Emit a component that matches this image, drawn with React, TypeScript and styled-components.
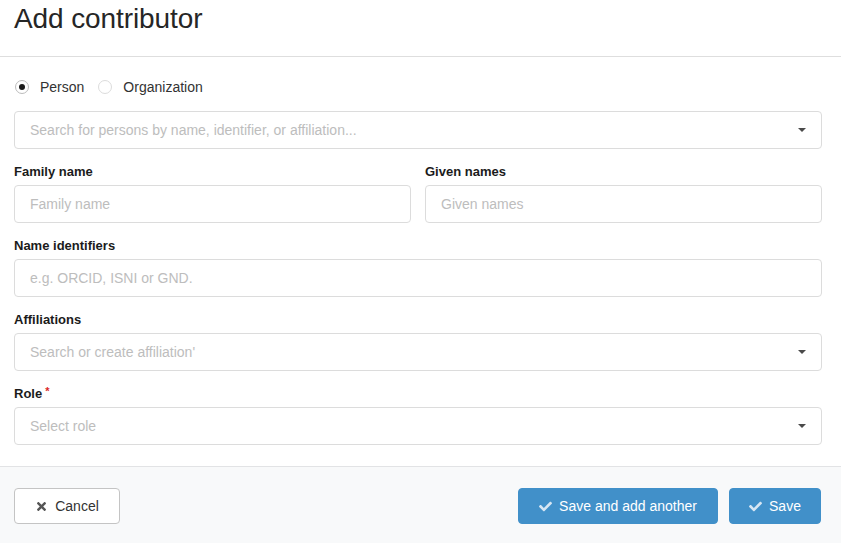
import { createGlobalStyle } from "styled-components";
import styled from "styled-components";
import { FaCheck, FaTimes } from "react-icons/fa";

const GlobalStyle = createGlobalStyle`
  html, body {
    margin: 0;
    padding: 0;
    background: #fff;
  }
  body {
    font-family: "Liberation Sans", Arial, sans-serif;
    color: #222;
  }
`;

const ModalRoot = styled.div`
  width: 841px;
  display: flex;
  flex-direction: column;
  background: #fff;
`;
const Header = styled.div`
  height: 57px;
  box-sizing: border-box;
  padding: 2px 14px 0;
  border-bottom: 1px solid #dedede;
`;
const Title = styled.h1`
  margin: 0;
  font-size: 28px;
  font-weight: 400;
  line-height: 34px;
  color: #262626;
  letter-spacing: -0.1px;
`;
const Content = styled.div`
  display: flex;
  flex-direction: column;
  padding: 20px 19px 21px 14px;
`;
const RadioRow = styled.div`
  display: flex;
  align-items: center;
  height: 20px;
  gap: 13px;
  margin-bottom: 14px;
`;
const RadioOption = styled.label`
  display: flex;
  align-items: center;
  gap: 11px;
  font-size: 14px;
  color: #333;
`;
const RadioCircle = styled.span<{ $checked?: boolean }>`
  width: 14px;
  height: 14px;
  box-sizing: border-box;
  border-radius: 50%;
  border: 1px solid ${(p) => (p.$checked ? "#bcbcbc" : "#dcdcdc")};
  display: flex;
  align-items: center;
  justify-content: center;
  margin-left: 1px;
  &::after {
    content: "";
    width: 6px;
    height: 6px;
    border-radius: 50%;
    background: ${(p) => (p.$checked ? "#1b1b1b" : "transparent")};
  }
`;
const Row = styled.div`
  display: grid;
  grid-template-columns: 1fr 1fr;
  column-gap: 14px;
`;
const Field = styled.div`
  display: flex;
  flex-direction: column;
  margin-top: 14px;
`;
const Label = styled.div`
  font-size: 13px;
  font-weight: 700;
  line-height: 18px;
  color: #1b1b1b;
  margin-bottom: 4px;
  display: flex;
  align-items: flex-start;
`;
const Required = styled.span`
  color: #db2828;
  font-size: 11px;
  line-height: 12px;
  margin-left: 3px;
`;
const Input = styled.div<{ $select?: boolean }>`
  height: 38px;
  box-sizing: border-box;
  border: 1px solid #dcdcdc;
  border-radius: 4px;
  display: flex;
  align-items: center;
  justify-content: space-between;
  padding: 0 14px 0 15px;
  font-size: 14px;
  color: #bdbdbd;
  background: #fff;
`;
const Caret = styled.span`
  width: 0;
  height: 0;
  border-left: 4px solid transparent;
  border-right: 4px solid transparent;
  border-top: 4px solid #4a4a4a;
  margin-right: 1px;
`;
const Footer = styled.div`
  border-top: 1px solid #e2e3e5;
  background: #f8f9fa;
  display: flex;
  align-items: center;
  padding: 21px 20px 20px 14px;
  gap: 11px;
`;
const Spacer = styled.div`
  flex: 1;
`;
const Button = styled.button<{ $primary?: boolean; $w: number }>`
  width: ${(p) => p.$w}px;
  height: 36px;
  box-sizing: border-box;
  border-radius: 4px;
  border: 1px solid ${(p) => (p.$primary ? "#4190c9" : "#c4c4c4")};
  background: ${(p) => (p.$primary ? "#4190c9" : "#fff")};
  color: ${(p) => (p.$primary ? "#fff" : "#333")};
  font-family: "Liberation Sans", Arial, sans-serif;
  font-size: 14px;
  display: flex;
  align-items: center;
  justify-content: center;
  gap: 7px;
  padding: 0;
  cursor: pointer;
  svg {
    color: ${(p) => (p.$primary ? "#d6e6f3" : "#555")};
  }
`;

const SelectField = ({ placeholder }: { placeholder: string }) => (
  <Input $select>
    <span>{placeholder}</span>
    <Caret />
  </Input>
);

export default function App() {
  return (
    <ModalRoot>
      <GlobalStyle />
      <Header>
        <Title>Add contributor</Title>
      </Header>
      <Content>
        <RadioRow>
          <RadioOption>
            <RadioCircle $checked />
            Person
          </RadioOption>
          <RadioOption>
            <RadioCircle />
            Organization
          </RadioOption>
        </RadioRow>
        <SelectField placeholder="Search for persons by name, identifier, or affiliation..." />
        <Row>
          <Field>
            <Label>Family name</Label>
            <Input>Family name</Input>
          </Field>
          <Field>
            <Label>Given names</Label>
            <Input>Given names</Input>
          </Field>
        </Row>
        <Field>
          <Label>Name identifiers</Label>
          <Input>e.g. ORCID, ISNI or GND.</Input>
        </Field>
        <Field>
          <Label>Affiliations</Label>
          <SelectField placeholder="Search or create affiliation'" />
        </Field>
        <Field>
          <Label>
            Role<Required>*</Required>
          </Label>
          <SelectField placeholder="Select role" />
        </Field>
      </Content>
      <Footer>
        <Button $w={106}>
          <FaTimes size={13} />
          Cancel
        </Button>
        <Spacer />
        <Button $primary $w={200}>
          <FaCheck size={13} />
          Save and add another
        </Button>
        <Button $primary $w={92}>
          <FaCheck size={13} />
          Save
        </Button>
      </Footer>
    </ModalRoot>
  );
}
